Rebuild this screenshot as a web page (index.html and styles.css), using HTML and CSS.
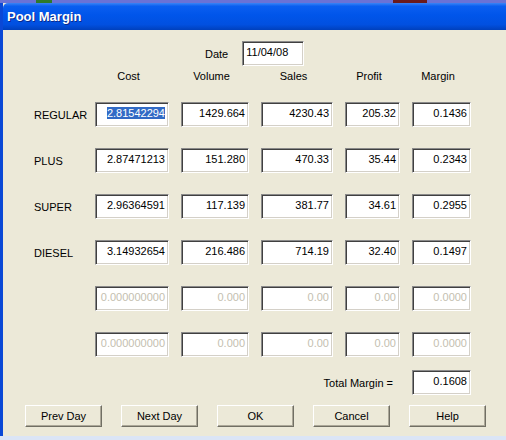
FILE: index.html
```html
<!DOCTYPE html>
<html>
<head>
  <title>Pool Margin</title>
  <link rel="stylesheet" href="styles.css">
</head>
<body>
  <div class="desktop">
    <span class="spot-green"></span>
    <span class="spot-red"></span>
  </div>

  <div class="window">
    <div class="titlebar">Pool Margin</div>

    <div class="content">
      <div class="date-row">
        <span class="date-label">Date</span>
        <div class="edit date-edit">11/04/08</div>
      </div>

      <div class="grid">
        <div></div>
        <div class="head">Cost</div>
        <div class="head">Volume</div>
        <div class="head">Sales</div>
        <div class="head">Profit</div>
        <div class="head">Margin</div>

        <div class="label">REGULAR</div>
        <div class="edit"><span class="sel">2.81542294</span></div>
        <div class="edit">1429.664</div>
        <div class="edit">4230.43</div>
        <div class="edit">205.32</div>
        <div class="edit">0.1436</div>

        <div class="label">PLUS</div>
        <div class="edit">2.87471213</div>
        <div class="edit">151.280</div>
        <div class="edit">470.33</div>
        <div class="edit">35.44</div>
        <div class="edit">0.2343</div>

        <div class="label">SUPER</div>
        <div class="edit">2.96364591</div>
        <div class="edit">117.139</div>
        <div class="edit">381.77</div>
        <div class="edit">34.61</div>
        <div class="edit">0.2955</div>

        <div class="label">DIESEL</div>
        <div class="edit">3.14932654</div>
        <div class="edit">216.486</div>
        <div class="edit">714.19</div>
        <div class="edit">32.40</div>
        <div class="edit">0.1497</div>

        <div class="label"></div>
        <div class="edit off">0.000000000</div>
        <div class="edit off">0.000</div>
        <div class="edit off">0.00</div>
        <div class="edit off">0.00</div>
        <div class="edit off">0.0000</div>

        <div class="label"></div>
        <div class="edit off">0.000000000</div>
        <div class="edit off">0.000</div>
        <div class="edit off">0.00</div>
        <div class="edit off">0.00</div>
        <div class="edit off">0.0000</div>
      </div>

      <div class="grid total-row">
        <div class="total-label">Total Margin =</div>
        <div class="edit">0.1608</div>
      </div>

      <div class="buttons">
        <button>Prev Day</button>
        <button>Next Day</button>
        <button>OK</button>
        <button>Cancel</button>
        <button>Help</button>
      </div>
    </div>
  </div>
</body>
</html>
```

FILE: styles.css
```css
html, body {
  margin: 0;
  padding: 0;
}

body {
  width: 506px;
  height: 440px;
  overflow: hidden;
  background: #dbe5f6;
  font-family: "Liberation Sans", Arial, sans-serif;
  font-size: 11px;
  color: #000;
}

.desktop {
  height: 3px;
  background: #6a72d6;
  display: flex;
}

.spot-green {
  width: 16px;
  margin-left: 36px;
  background: #2f7a2a;
}

.spot-red {
  width: 34px;
  margin-left: 341px;
  background: #6b1a1a;
}

.window {
  border-left: 3px solid #0a48d6;
  background: #ece9d8;
}

.titlebar {
  height: 27px;
  line-height: 27px;
  padding-left: 4px;
  color: #fff;
  font-weight: bold;
  font-size: 13px;
  text-shadow: 1px 1px 0 #0a2a8c;
  background: linear-gradient(to bottom, #3a84f6 0%, #0a5ef0 12%, #0055ea 45%, #0150e0 80%, #0040bc 100%);
  border-top-left-radius: 5px;
}

.content {
  height: 406px;
  box-sizing: border-box;
  padding-top: 11px;
}

.date-row {
  display: flex;
  align-items: center;
  padding-left: 202px;
  gap: 14px;
}

.grid {
  display: grid;
  grid-template-columns: 49px 74px 68px 72px 55px 59px;
  column-gap: 12px;
  row-gap: 21px;
  padding-left: 31px;
  margin-top: 5px;
}

.head {
  line-height: 10px;
  height: 10px;
  text-align: center;
  padding-right: 7px;
}

.label {
  align-self: center;
  white-space: nowrap;
}

.edit {
  box-sizing: border-box;
  height: 25px;
  line-height: 21px;
  background: #fff;
  border: 1px solid;
  border-color: #8a8a8a #fff #fff #8a8a8a;
  box-shadow: inset 1px 1px 0 #404040, inset -1px -1px 0 #d4d0c8;
  text-align: right;
  padding-right: 3px;
  overflow: hidden;
  white-space: nowrap;
}

.edit.date-edit {
  width: 62px;
  text-align: left;
  padding-left: 3px;
}

.edit.off {
  color: #c4c0b0;
}

.sel {
  background: #316ac5;
  color: #fff;
}

.total-row {
  margin-top: 13px;
}

.total-label {
  grid-column: 1 / 6;
  justify-self: end;
  align-self: center;
  padding-right: 7px;
}

.buttons {
  display: flex;
  gap: 19px;
  padding-left: 22px;
  margin-top: 10px;
}

.buttons button {
  width: 77px;
  height: 22px;
  padding: 0;
  font-family: "Liberation Sans", Arial, sans-serif;
  font-size: 11px;
  color: #000;
  background: #ece9d8;
  border: 1px solid;
  border-color: #fff #716f64 #716f64 #fff;
  box-shadow: inset -1px -1px 0 #aca899;
}
```
